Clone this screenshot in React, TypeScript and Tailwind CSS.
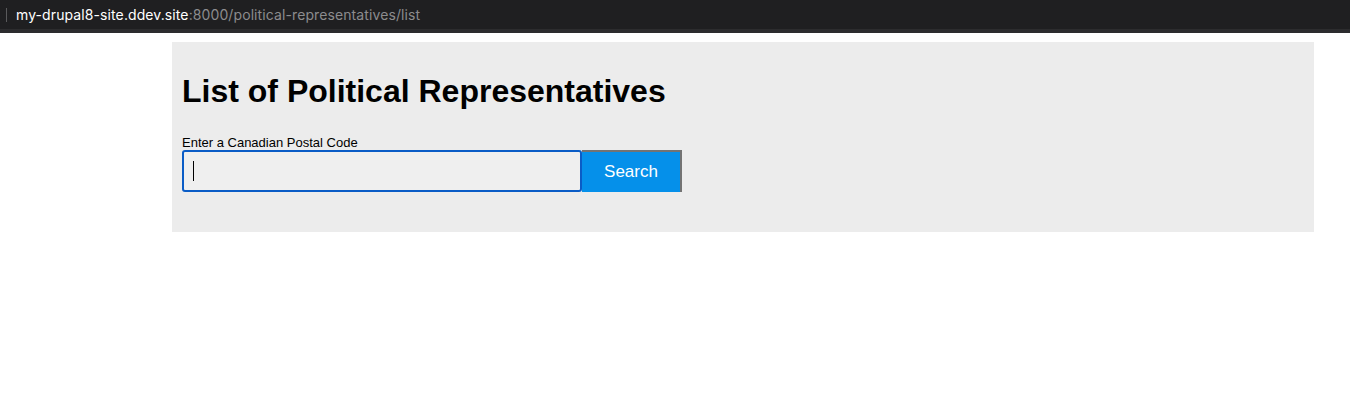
export default function App() {
  return (
    <div className="min-h-[417px] bg-white font-['Liberation_Sans',Arial,sans-serif]">
      <div className="h-[29px] bg-[#1f1f21] flex items-center pl-[6px]">
        <div className="w-px h-[14px] bg-[#5a5a5c]" />
        <div className="ml-[9px] text-[14px] leading-none tracking-[0.1px] font-['Inter',sans-serif]">
          <span className="text-white">my-drupal8-site.ddev.site</span>
          <span className="text-[#8c8c8e]">:8000/political-representatives/list</span>
        </div>
      </div>
      <div className="h-[4px] bg-[#2c2c2e]" />
      <div className="pt-[9px] pl-[172px] pr-[36px]">
        <div className="bg-[#ececec] h-[190px] pl-[10px] pt-[29px]">
          <h1 className="text-[32px] font-bold text-black leading-[40px]">
            List of Political Representatives
          </h1>
          <div className="mt-[24px] text-[13px] leading-[15px] text-black">
            Enter a Canadian Postal Code
          </div>
          <div className="flex">
            <div className="w-[400px] h-[42px] border-2 border-[#0a5cc6] rounded-[3px] bg-[#efefef] flex items-center pl-[9px]">
              <div className="w-px h-[20px] bg-black" />
            </div>
            <button className="w-[100px] h-[42px] bg-[#0590ea] text-white text-[17px] border-t-2 border-r-2 border-[#737373]">
              Search
            </button>
          </div>
        </div>
      </div>
    </div>
  );
}
